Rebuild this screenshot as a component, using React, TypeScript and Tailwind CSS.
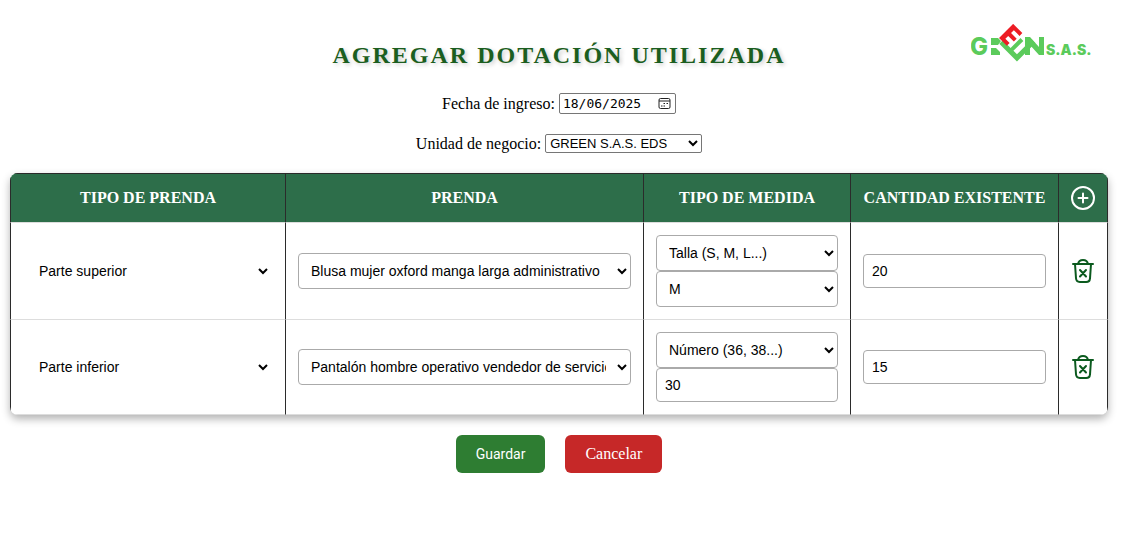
import { useState } from "react";

const th =
  "border-t border-b border-l border-t-[#2b2b2b] border-l-[#2b2b2b] border-b-[#dddddd] px-3 py-3 text-center text-base leading-6 font-bold whitespace-nowrap text-white";
const td = "border-b border-l border-b-[#dddddd] border-l-[#2b2b2b] px-3 py-3 align-middle";
const lastCell = "border-r border-r-[#2b2b2b]";
const field =
  "block w-full rounded border border-[#aaaaaa] bg-white px-2 font-[Liberation_Sans,sans-serif] text-sm text-black";
const selectField = `${field} h-9`;
const inputField = `${field} h-[34px]`;
const plainSelect =
  "block h-9 w-full rounded border-2 border-transparent bg-white px-2.5 font-[Liberation_Sans,sans-serif] text-sm text-black";

function Logo() {
  return (
    <svg
      width="124"
      height="40"
      viewBox="0 0 124 40"
      role="img"
      aria-label="GREEN S.A.S."
      className="font-[Inter,sans-serif] font-extrabold"
      fill="#5bcb5b"
    >
      <text x="-1" y="31" fontSize="24">G</text>
      <path d="M20 14h7l3 3-3 4h-7zM20 24h5l4 4v3h-9z" />
      <g transform="translate(29 19) rotate(-45)">
        <path d="M-1 0h5v11h14v4H4v5h21v5H-1z" />
      </g>
      <g transform="translate(28 14) rotate(-45)" fill="#ed1c24">
        <path d="M0 0h20v13h-4V5h-4v8H8V5H4v6H0z" />
      </g>
      <path d="M54 13h5l9 10v-10h5v18h-5l-9-10v10h-5z" />
      <text x="75" y="31" fontSize="14" fontWeight="900">S.A.S.</text>
    </svg>
  );
}

function PlusCircle() {
  return (
    <svg width="24" height="24" viewBox="0 0 24 24" fill="none" stroke="currentColor" strokeWidth="2" strokeLinecap="round" aria-hidden="true">
      <circle cx="12" cy="12" r="11" />
      <path d="M12 7.500v9M7.500 12h9" />
    </svg>
  );
}

function TrashX() {
  return (
    <svg width="24" height="24" viewBox="0 0 24 24" fill="none" stroke="currentColor" strokeWidth="2" strokeLinecap="round" strokeLinejoin="round" aria-hidden="true">
      <path d="M2 5h20" />
      <path d="M7 5C7.500 2.500 9.500 1 12 1s4.500 1.500 5 4" />
      <path d="M4 5l1 14.300C5.200 21.800 6.600 23 8.800 23h6.400c2.200 0 3.600-1.200 3.800-3.700L20 5" />
      <path d="M9 11l6 6.500M15 11l-6 6.500" />
    </svg>
  );
}

function CalendarIcon() {
  return (
    <svg width="13" height="13" viewBox="0 0 13 13" fill="none" stroke="#222222" aria-hidden="true">
      <rect x="1" y="1.500" width="11" height="10" rx="1.500" />
      <path d="M1 4h11" />
      <path d="M5.500 6.500H7M8.500 6.500H10M3 9H4.500M5.500 9H7" strokeWidth="1.200" />
    </svg>
  );
}

export default function App() {
  const [date, setDate] = useState("18/06/2025");
  return (
    <main className="relative pr-[17px] pl-2.5 font-[Liberation_Serif,serif] text-base text-black">
      <div className="absolute top-6 right-[30px]">
        <Logo />
      </div>
      <h1 className="pt-10 text-center text-2xl leading-[30px] font-bold tracking-[2px] text-[#1b5e20] [text-shadow:2px_2px_4px_rgba(0,0,0,0.2)]">
        AGREGAR DOTACIÓN UTILIZADA
      </h1>
      <form onSubmit={(e) => e.preventDefault()}>
        <div className="mt-[23px] flex h-[21px] items-center justify-center gap-1">
          <label htmlFor="fecha">Fecha de ingreso:</label>
          <div className="flex h-[21px] w-[117px] items-center justify-between rounded-xs border border-[#767676] bg-white pr-1 pl-[3px]">
            <input
              id="fecha"
              value={date}
              onChange={(e) => setDate(e.target.value)}
              className="w-[84px] font-[DejaVu_Sans_Mono,monospace] text-[13px] leading-4 outline-none"
            />
            <button type="button" aria-label="Abrir calendario">
              <CalendarIcon />
            </button>
          </div>
        </div>
        <div className="mt-5 flex h-[19px] items-center justify-center gap-1">
          <label htmlFor="unidad">Unidad de negocio:</label>
          <select
            id="unidad"
            className="h-[19px] w-[157px] rounded-xs border border-[#767676] bg-white font-[Liberation_Sans,sans-serif] text-[13px]"
          >
            <option>GREEN S.A.S. EDS</option>
          </select>
        </div>

        <table className="mt-5 w-full table-fixed border-separate border-spacing-0 overflow-hidden rounded-lg bg-white shadow-[0_4px_8px_rgba(0,0,0,0.3)]">
          <colgroup>
            <col className="w-[275px]" />
            <col />
            <col className="w-[207px]" />
            <col className="w-[208px]" />
            <col className="w-[50px]" />
          </colgroup>
          <thead className="bg-[#2d6e4a]">
            <tr>
              <th className={th}>TIPO DE PRENDA</th>
              <th className={th}>PRENDA</th>
              <th className={th}>TIPO DE MEDIDA</th>
              <th className={th}>CANTIDAD EXISTENTE</th>
              <th className={`${th} ${lastCell}`}>
                <button type="button" aria-label="Agregar fila" className="block">
                  <PlusCircle />
                </button>
              </th>
            </tr>
          </thead>
          <tbody>
            <tr>
              <td className={td}>
                <select aria-label="Tipo de prenda" className={plainSelect}>
                  <option>Parte superior</option>
                </select>
              </td>
              <td className={td}>
                <select aria-label="Prenda" className={selectField}>
                  <option>Blusa mujer oxford manga larga administrativo</option>
                </select>
              </td>
              <td className={td}>
                <select aria-label="Tipo de medida" className={selectField}>
                  <option>Talla (S, M, L...)</option>
                </select>
                <select aria-label="Talla" className={selectField}>
                  <option>M</option>
                </select>
              </td>
              <td className={td}>
                <input aria-label="Cantidad existente" defaultValue="20" className={inputField} />
              </td>
              <td className={`${td} ${lastCell}`}>
                <button type="button" aria-label="Eliminar fila" className="block text-[#0b5a1e]">
                  <TrashX />
                </button>
              </td>
            </tr>
            <tr>
              <td className={td}>
                <select aria-label="Tipo de prenda" className={plainSelect}>
                  <option>Parte inferior</option>
                </select>
              </td>
              <td className={td}>
                <select aria-label="Prenda" className={selectField}>
                  <option>Pantalón hombre operativo vendedor de servicio</option>
                </select>
              </td>
              <td className={td}>
                <select aria-label="Tipo de medida" className={selectField}>
                  <option>Número (36, 38...)</option>
                </select>
                <input aria-label="Número" defaultValue="30" className={inputField} />
              </td>
              <td className={td}>
                <input aria-label="Cantidad existente" defaultValue="15" className={inputField} />
              </td>
              <td className={`${td} ${lastCell}`}>
                <button type="button" aria-label="Eliminar fila" className="block text-[#0b5a1e]">
                  <TrashX />
                </button>
              </td>
            </tr>
          </tbody>
        </table>

        <div className="mt-5 flex justify-center gap-5">
          <button type="submit" className="h-[38px] rounded-md bg-[#2e7d32] px-5 font-[Roboto,sans-serif] text-sm text-white">
            Guardar
          </button>
          <a href="#cancelar" className="flex h-[38px] items-center rounded-md bg-[#c62828] px-5 text-white">
            Cancelar
          </a>
        </div>
      </form>
    </main>
  );
}
